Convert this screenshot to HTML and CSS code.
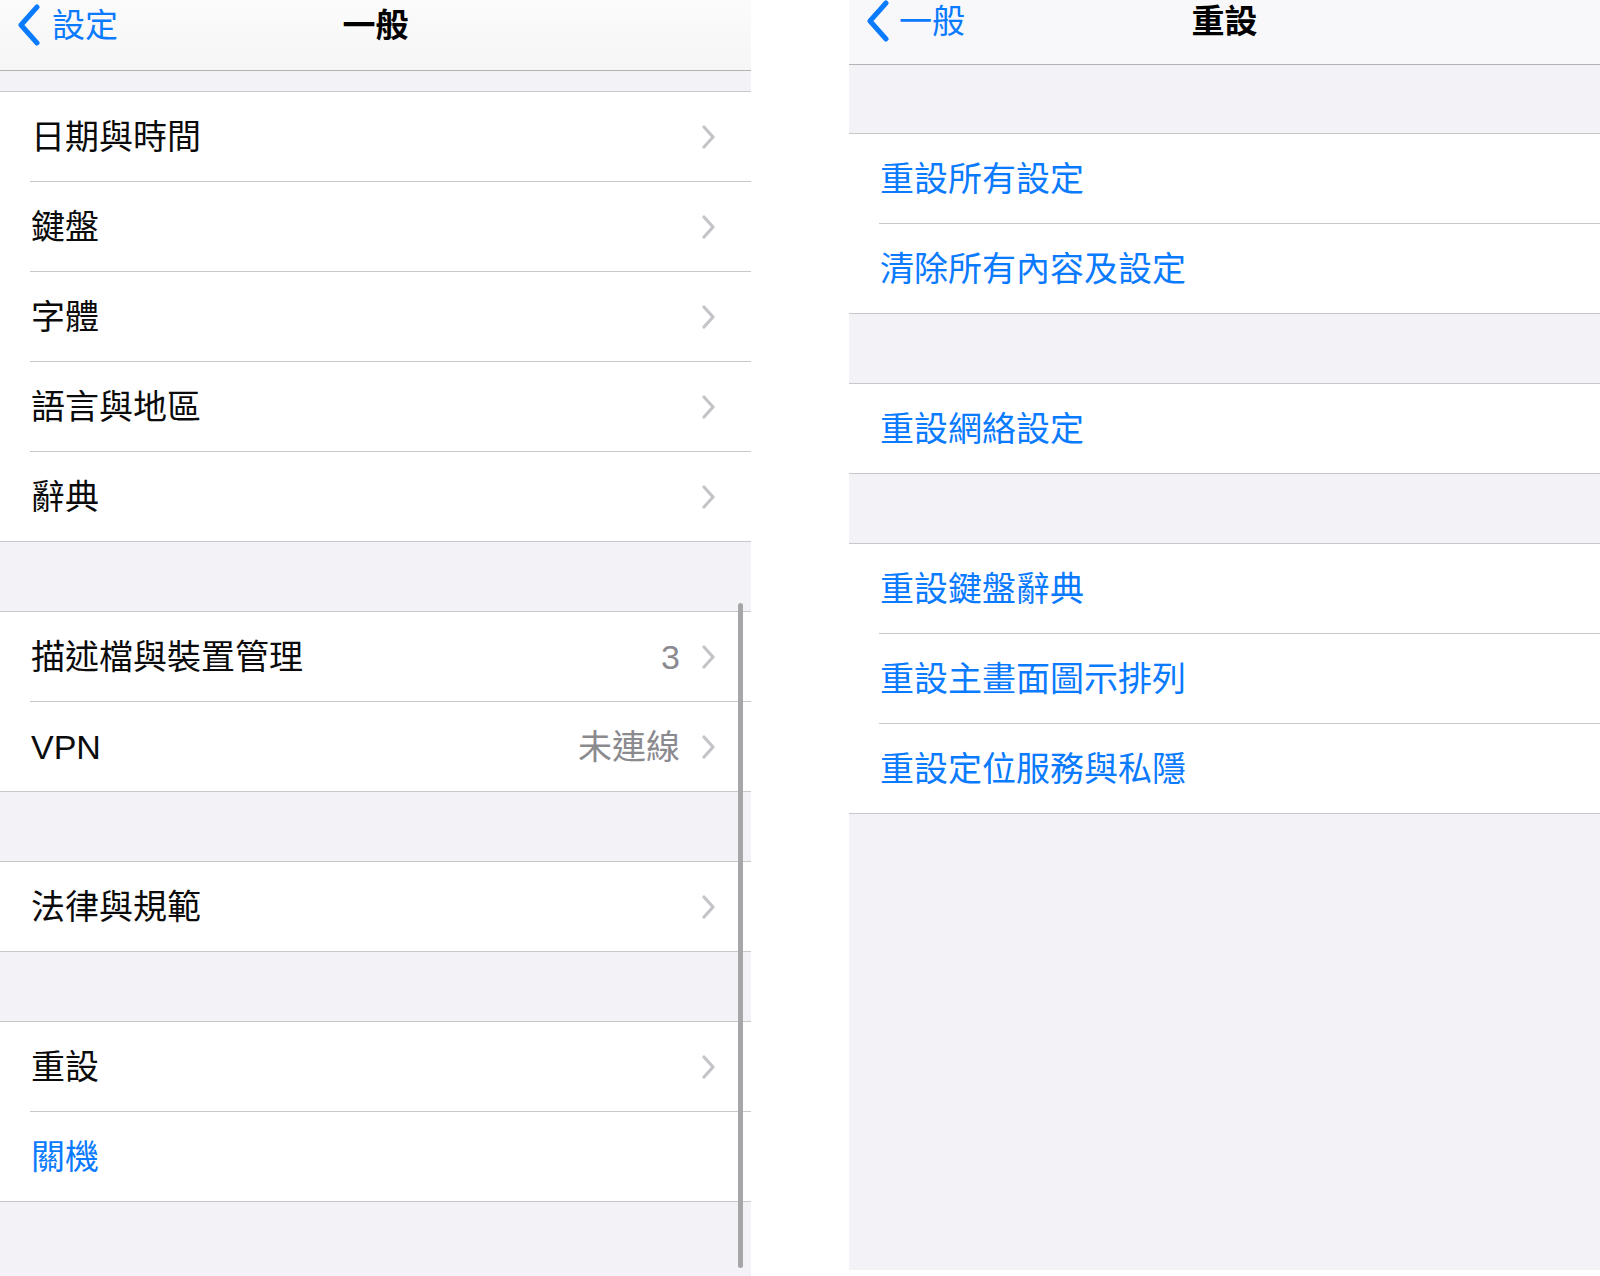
FILE: index.html
```html
<!DOCTYPE html>
<html lang="zh-Hant">
<head>
    <meta charset="UTF-8">
    <meta name="viewport" content="width=device-width, initial-scale=1.0">
    <title>一般 / 重設</title>
    <link rel="stylesheet" href="styles.css">
</head>
<body>
    <div class="page">
        <section class="screen screen-general">
            <header class="navbar">
                <a class="back" href="#">
                    <svg class="back-icon" width="26" height="42" viewBox="0 0 26 42"><path d="M21 3 L5 21 L21 39" /></svg>
                    <span>設定</span>
                </a>
                <h1 class="title">一般</h1>
                <span></span>
            </header>
            <div class="content">
                <ul class="group">
                    <li class="cell"><span class="label">日期與時間</span><span class="chevron"></span></li>
                    <li class="cell"><span class="label">鍵盤</span><span class="chevron"></span></li>
                    <li class="cell"><span class="label">字體</span><span class="chevron"></span></li>
                    <li class="cell"><span class="label">語言與地區</span><span class="chevron"></span></li>
                    <li class="cell"><span class="label">辭典</span><span class="chevron"></span></li>
                </ul>
                <ul class="group">
                    <li class="cell"><span class="label">描述檔與裝置管理</span><span class="detail">3</span><span class="chevron"></span></li>
                    <li class="cell"><span class="label">VPN</span><span class="detail">未連線</span><span class="chevron"></span></li>
                </ul>
                <ul class="group">
                    <li class="cell"><span class="label">法律與規範</span><span class="chevron"></span></li>
                </ul>
                <ul class="group">
                    <li class="cell"><span class="label">重設</span><span class="chevron"></span></li>
                    <li class="cell"><span class="label action">關機</span></li>
                </ul>
            </div>
            <div class="scroll-indicator"></div>
        </section>

        <section class="screen screen-reset">
            <header class="navbar">
                <a class="back" href="#">
                    <svg class="back-icon" width="26" height="42" viewBox="0 0 26 42"><path d="M21 3 L5 21 L21 39" /></svg>
                    <span>一般</span>
                </a>
                <h1 class="title">重設</h1>
                <span></span>
            </header>
            <div class="content">
                <ul class="group">
                    <li class="cell"><span class="label action">重設所有設定</span></li>
                    <li class="cell"><span class="label action">清除所有內容及設定</span></li>
                </ul>
                <ul class="group">
                    <li class="cell"><span class="label action">重設網絡設定</span></li>
                </ul>
                <ul class="group">
                    <li class="cell"><span class="label action">重設鍵盤辭典</span></li>
                    <li class="cell"><span class="label action">重設主畫面圖示排列</span></li>
                    <li class="cell"><span class="label action">重設定位服務與私隱</span></li>
                </ul>
            </div>
        </section>
    </div>
</body>
</html>
```

FILE: styles.css
```css
body, html {
    margin: 0;
    background: #ffffff;
    font-family: "Liberation Sans", "Noto Sans CJK TC", sans-serif;
    color: #0b0b0b;
}
.page {
    display: flex;
    gap: 98px;
    height: 1276px;
    overflow: hidden;
}
.screen {
    position: relative;
    width: 751px;
    background: #f2f2f7;
    overflow: hidden;
}
.screen-general {
    height: 1276px;
}
.screen-reset {
    width: 751px;
    height: 1270px;
}
.navbar {
    display: grid;
    grid-template-columns: 1fr auto 1fr;
    align-items: center;
    box-sizing: border-box;
    height: 71px;
    padding-bottom: 20px;
    background: linear-gradient(#fbfbfb, #f6f6f7);
    border-bottom: 1px solid #b3b3b6;
}
.screen-reset .navbar {
    height: 65px;
    padding-bottom: 23px;
    background: #f8f8fa;
}
.back {
    display: flex;
    align-items: center;
    gap: 10px;
    padding-left: 16px;
    color: #0a7aff;
    font-size: 33px;
    line-height: 1;
    text-decoration: none;
}
.screen-reset .back {
    padding-left: 16px;
    gap: 8px;
}
.back-icon path {
    fill: none;
    stroke: #0a7aff;
    stroke-width: 5;
    stroke-linecap: round;
    stroke-linejoin: round;
}
.title {
    margin: 0;
    font-size: 33px;
    font-weight: 600;
    line-height: 1;
    color: #000000;
}
.content {
    padding-top: 20px;
}
.screen-reset .content {
    padding-top: 68px;
}
.group {
    list-style: none;
    margin: 0 0 69px;
    padding: 0;
    background: #ffffff;
    border-top: 1px solid #c8c7cc;
    border-bottom: 1px solid #c8c7cc;
}
.cell {
    display: flex;
    align-items: center;
    height: 89px;
    margin-left: 30px;
    padding: 0 36px 0 1px;
    border-bottom: 1px solid #c8c7cc;
}
.cell:last-child {
    border-bottom: none;
}
.label {
    flex: 1;
    font-size: 34px;
    line-height: 1;
}
.label.action {
    color: #0a7aff;
}
.detail {
    margin-right: 22px;
    font-size: 34px;
    line-height: 1;
    color: #8a8a8f;
}
.chevron {
    width: 13px;
    height: 24px;
    background: url("data:image/svg+xml,%3Csvg xmlns='http://www.w3.org/2000/svg' width='13' height='24' viewBox='0 0 13 24'%3E%3Cpath d='M2 2 L11 12 L2 22' fill='none' stroke='%23c4c4c8' stroke-width='3.2' stroke-linecap='round' stroke-linejoin='round'/%3E%3C/svg%3E") no-repeat center;
}
.scroll-indicator {
    position: absolute;
    top: 603px;
    right: 8px;
    width: 5px;
    height: 665px;
    border-radius: 3px;
    background: #a6a6a8;
}
```
